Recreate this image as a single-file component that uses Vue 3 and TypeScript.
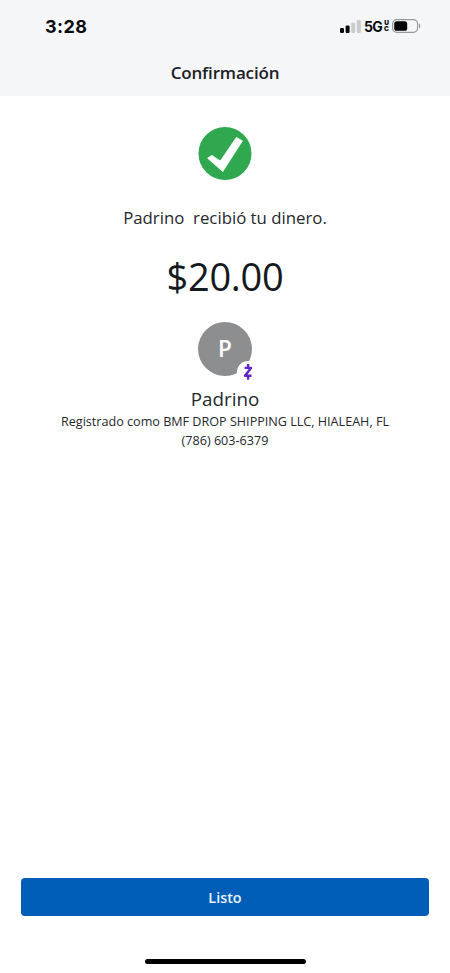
<script setup lang="ts">
interface Recipient {
  name: string
  registeredAs: string
  phone: string
}

const amount = '$20.00'
const recipient: Recipient = {
  name: 'Padrino',
  registeredAs: 'Registrado como BMF DROP SHIPPING LLC, HIALEAH, FL',
  phone: '(786) 603-6379',
}
</script>

<template>
  <div class="screen">
    <header class="top">
      <div class="status">
        <span class="time">3:28</span>
        <div class="indicators">
          <svg class="signal" width="21" height="13" viewBox="0 0 21 13">
            <rect x="0" y="8" width="4" height="5" rx="1.2" fill="#080a0c" />
            <rect x="5.6" y="5.6" width="4" height="7.4" rx="1.2" fill="#080a0c" />
            <rect x="11.2" y="2.8" width="4" height="10.2" rx="1.2" fill="#c9cacc" />
            <rect x="16.8" y="0" width="4" height="13" rx="1.2" fill="#c9cacc" />
          </svg>
          <span class="network">5G</span>
          <span class="uc"><span>U</span><span>C</span></span>
          <svg class="battery" width="30" height="14" viewBox="0 0 30 14">
            <rect x="0.6" y="0.6" width="25" height="12.8" rx="4.2" fill="none" stroke="#96989a" stroke-width="1.2" />
            <rect x="2.2" y="2.2" width="13" height="9.6" rx="2.6" fill="#050607" />
            <path d="M27 4.6c1.8.7 1.8 4.1 0 4.8z" fill="#96989a" />
          </svg>
        </div>
      </div>
      <h1 class="title">Confirmación</h1>
    </header>

    <main class="content">
      <svg class="check" width="54" height="54" viewBox="0 0 54 54">
        <circle cx="27" cy="27.5" r="26.5" fill="#2fa84f" />
        <path d="M9.6 32.2L13.8 29.4L22.3 35L38.4 11.4L44.4 14.9L24.8 45.5Z" fill="#fff" stroke="#fff" stroke-width="0.8" stroke-linejoin="round" />
      </svg>
      <p class="message">{{ recipient.name }}&nbsp; recibió tu dinero.</p>
      <p class="amount">{{ amount }}</p>
      <div class="avatar">
        <span class="initial">{{ recipient.name.charAt(0) }}</span>
        <svg class="badge" width="22" height="22" viewBox="0 0 22 22">
          <circle cx="11" cy="11" r="11" fill="#fff" />
          <path d="M7.6 6.9H14L8 14.7H14.5M11.1 3V7M11.1 14.5V18.8" fill="none" stroke="#6224c4" stroke-width="2.4" stroke-linejoin="round" />
        </svg>
      </div>
      <h2 class="name">{{ recipient.name }}</h2>
      <p class="detail registered">{{ recipient.registeredAs }}</p>
      <p class="detail phone">{{ recipient.phone }}</p>
    </main>

    <footer class="bottom">
      <button class="done" type="button">Listo</button>
      <div class="home"></div>
    </footer>
  </div>
</template>

<style>
body {
  margin: 0;
  background: #fff;
}
</style>

<style scoped>
.screen {
  display: flex;
  flex-direction: column;
  width: 450px;
  height: 973px;
  overflow: hidden;
  background: #fff;
  color: #24282c;
  font-family: "Open Sans", "Noto Sans", sans-serif;
}
.top {
  height: 96px;
  background: #f5f6f8;
  flex: none;
}
.status {
  display: flex;
  justify-content: space-between;
  align-items: center;
  height: 52px;
  padding: 0 28px 0 45px;
  box-sizing: border-box;
  font-family: Inter, sans-serif;
  color: #080a0c;
}
.time {
  font-size: 18px;
  font-weight: 700;
  letter-spacing: 0.4px;
}
.indicators {
  display: flex;
  align-items: center;
}
.network {
  margin-left: 3px;
  font-size: 14px;
  font-weight: 700;
  letter-spacing: -0.7px;
}
.uc {
  display: flex;
  flex-direction: column;
  align-items: center;
  width: 5px;
  margin: 0 3px 0 2px;
  font-size: 6.5px;
  line-height: 6px;
  font-weight: 900;
}
.title {
  margin: 9px 0 0;
  text-align: center;
  font-size: 17px;
  line-height: 24px;
  font-weight: 550;
  letter-spacing: -0.16px;
  color: #1b2126;
}
.content {
  display: flex;
  flex-direction: column;
  align-items: center;
  flex: 1;
  padding-top: 30px;
}
.content p,
.name {
  margin: 0;
  font-weight: 400;
  white-space: nowrap;
}
.check {
  display: block;
}
.content .message {
  margin-top: 26px;
  font-size: 16.8px;
  line-height: 24px;
}
.content .amount {
  margin-top: 21px;
  font-size: 38px;
  line-height: 50px;
  letter-spacing: -0.3px;
  color: #15191d;
}
.avatar {
  position: relative;
  display: flex;
  align-items: center;
  justify-content: center;
  width: 54px;
  height: 54px;
  margin-top: 21px;
  border-radius: 50%;
  background: #8d8e90;
}
.initial {
  font-size: 22.5px;
  line-height: 30px;
  font-weight: 600;
  color: #fff;
}
.badge {
  position: absolute;
  left: 39px;
  top: 39px;
}
.name {
  margin-top: 10px;
  font-size: 18.8px;
  line-height: 26px;
}
.content .detail {
  font-size: 12.6px;
  line-height: 19px;
}
.bottom {
  display: flex;
  flex-direction: column;
  align-items: center;
  height: 95px;
  flex: none;
}
.done {
  width: 408px;
  height: 38px;
  padding: 0;
  border: 0;
  border-radius: 4px;
  background: #005eb8;
  color: #e9f4ff;
  font: 600 14.4px/39px "Open Sans", sans-serif;
}
.home {
  width: 161px;
  height: 5px;
  margin-top: 43px;
  border-radius: 3px;
  background: #000;
}
</style>
